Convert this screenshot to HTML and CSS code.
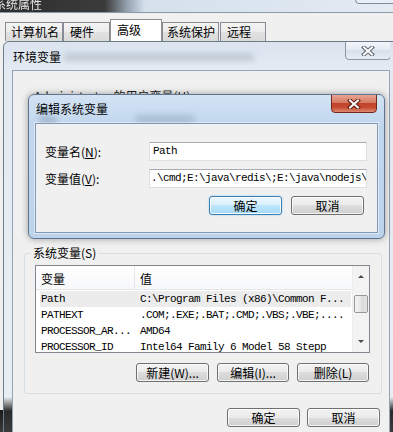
FILE: index.html
```html
<!DOCTYPE html>
<html lang="zh-CN">
<head>
    <meta charset="UTF-8">
    <title>编辑系统变量</title>
    <link rel="stylesheet" href="styles.css">
</head>
<body>
<div class="desk">
    <!-- System properties window behind -->
    <div class="sys-title">
        <span class="sys-title-text">系统属性</span>
        <span class="sys-close"></span>
    </div>
    <div class="sys-body">
        <div class="tabs">
            <span class="tab t1">计算机名</span>
            <span class="tab t2">硬件</span>
            <span class="tab t3 active">高级</span>
            <span class="tab t4">系统保护</span>
            <span class="tab t5">远程</span>
        </div>
    </div>
    <div class="taskbar-edge"></div>

    <!-- Environment variables window -->
    <div class="win env">
        <div class="win-title">
            <span class="title-text">环境变量</span>
            <span class="blur blur-env"></span>
            <span class="close close-gray">
                <svg width="14" height="10" viewBox="0 0 14 10"><path d="M3 1.5L11 8.5M11 1.5L3 8.5" stroke="#5b6470" stroke-width="4" stroke-linecap="square"/><path d="M3 1.5L11 8.5M11 1.5L3 8.5" stroke="#fff" stroke-width="2" stroke-linecap="square"/></svg>
            </span>
        </div>
        <div class="win-client env-client">
            <div class="user-group">
                <span class="user-label">Administrator 的用户变量(U)</span>
            </div>
            <fieldset class="group">
                <legend>系统变量(S)</legend>
                <div class="list">
                    <div class="list-body">
                        <div class="list-head">
                            <span class="head-name">变量</span>
                            <span class="head-val">值</span>
                        </div>
                        <div class="list-row sel"><span>Path</span><span>C:\Program Files (x86)\Common F...</span></div>
                        <div class="list-row"><span>PATHEXT</span><span>.COM;.EXE;.BAT;.CMD;.VBS;.VBE;....</span></div>
                        <div class="list-row"><span>PROCESSOR_AR...</span><span>AMD64</span></div>
                        <div class="list-row"><span>PROCESSOR_ID</span><span>Intel64 Family 6 Model 58 Stepp</span></div>
                    </div>
                    <div class="scrollbar">
                        <span class="arrow-up"></span>
                        <span class="thumb"></span>
                        <span class="arrow-down"></span>
                    </div>
                </div>
                <div class="btn-row">
                    <button class="btn w73">新建(W)...</button>
                    <button class="btn w72">编辑(I)...</button>
                    <button class="btn w72">删除(L)</button>
                </div>
            </fieldset>
            <div class="footer-btns">
                <button class="btn w73">确定</button>
                <button class="btn w73">取消</button>
            </div>
        </div>
    </div>

    <!-- Edit system variable window -->
    <div class="win edit">
        <div class="win-title">
            <span class="title-text">编辑系统变量</span>
            <span class="blur blur-edit-a"></span>
            <span class="blur blur-edit-b"></span>
            <span class="close close-red">
                <svg width="14" height="10" viewBox="0 0 14 10"><path d="M3 1.5L11 8.5M11 1.5L3 8.5" stroke="#5a1a10" stroke-width="4" stroke-linecap="square"/><path d="M3 1.5L11 8.5M11 1.5L3 8.5" stroke="#fff" stroke-width="2" stroke-linecap="square"/></svg>
            </span>
        </div>
        <div class="win-client edit-client">
            <div class="field">
                <label>变量名(<u>N</u>):</label>
                <div class="input">Path</div>
            </div>
            <div class="field">
                <label>变量值(<u>V</u>):</label>
                <div class="input scrolled">.\cmd;E:\java\redis\;E:\java\nodejs\</div>
            </div>
            <div class="edit-btns">
                <button class="btn btn-default w73">确定</button>
                <button class="btn w73">取消</button>
            </div>
        </div>
    </div>
</div>
</body>
</html>
```

FILE: styles.css
```css
* {
    margin: 0;
    padding: 0;
    box-sizing: border-box;
}
body {
    width: 393px;
    height: 432px;
    overflow: hidden;
    background: #f0f0f0;
    font-family: "Noto Sans CJK SC", sans-serif;
    font-size: 12px;
    color: #000;
}
u {
    text-decoration: underline;
}
.desk {
    position: relative;
    height: 432px;
    overflow: hidden;
}

/* system properties window */
.sys-title {
    position: relative;
    height: 13px;
    overflow: hidden;
    background: linear-gradient(90deg, #2e2e2e 0, #3b3b3b 105px, #97a5b3 128px, #d5e0ec 145px, #e3ebf3 100%);
    border-bottom: 1px solid #8c99a7;
}
.sys-title-text {
    display: block;
    margin: -4px 0 0 -6px;
    font-size: 12px;
    line-height: 15px;
    color: #e4e4e4;
    filter: blur(0.6px);
}
.sys-close {
    position: absolute;
    right: -4px;
    top: -4px;
    width: 42px;
    height: 8px;
    border: 1px solid #7f8a97;
    border-radius: 0 0 4px 4px;
    background: #e9eff6;
}
.sys-body {
    padding: 6px 0 0 5px;
}
.tabs {
    display: flex;
    align-items: flex-end;
    height: 22px;
}
.tab {
    height: 19px;
    line-height: 18px;
    padding-left: 6px;
    font-size: 12px;
    border: 1px solid #898c95;
    border-bottom: none;
    background: linear-gradient(#f4f4f4, #ebebeb 50%, #e1e1e1 50%, #dadada);
}
.tab.active {
    height: 22px;
    line-height: 20px;
    background: #fff;
    border-color: #8e8f8f;
}
.t1 { width: 58px; padding-left: 5px; }
.t2 { width: 47px; }
.t3 { width: 52px; }
.t4 { width: 57px; padding-left: 4px; }
.t5 { width: 46px; margin-left: 1px; }
.taskbar-edge {
    position: absolute;
    left: 0;
    top: 410px;
    width: 5px;
    height: 22px;
    background: linear-gradient(#1c1c1c, #3a3a3a);
}

/* windows */
.win {
    position: absolute;
    border: 1px solid #6e7b89;
}
.win-title {
    position: relative;
    height: 28px;
    overflow: hidden;
}
.title-text {
    position: relative;
    z-index: 1;
    display: inline-block;
    font-size: 12px;
    line-height: 14px;
}
.blur {
    position: absolute;
    border-radius: 4px;
    filter: blur(3px);
}
.blur-env {
    left: 52px;
    top: 12px;
    width: 190px;
    height: 6px;
    background: rgba(110, 120, 135, 0.35);
}
.blur-edit-a {
    left: 4px;
    top: 22px;
    width: 18px;
    height: 6px;
    background: rgba(60, 75, 95, 0.3);
}
.blur-edit-b {
    left: 100px;
    top: 20px;
    width: 60px;
    height: 8px;
    background: rgba(60, 75, 95, 0.2);
}
.close {
    position: absolute;
    top: -1px;
    display: flex;
    align-items: center;
    justify-content: center;
    height: 19px;
    border-radius: 0 0 4px 4px;
    z-index: 2;
}
.close-gray {
    right: -1px;
    width: 46px;
    border: 1px solid #8a96a4;
    background: linear-gradient(#f3f6fa, #e3eaf2 50%, #d7e0ea 50%, #e6edf5);
}
.close-red {
    right: 1px;
    width: 46px;
    border: 1px solid #6e2a1d;
    background: linear-gradient(#e9a493, #d57a62 45%, #c2432b 50%, #c54a2f 72%, #e08a70);
}
.win-client {
    background: #f0f0f0;
    border: 1px solid #97a3b2;
}

/* environment variables window */
.env {
    left: 3px;
    top: 41px;
    width: 396px;
    height: 400px;
    padding: 0 8px;
    border-radius: 6px 6px 0 0;
    background: linear-gradient(180deg, #dae4ef 0, #e3eaf2 28px, #e9eef4 355px, #2a2a2a 369px, #3c3c3c 391px);
}
.env .title-text {
    margin: 8px 0 0 1px;
}
.env-client {
    height: 380px;
}
.user-group {
    height: 175px;
    padding: 16px 0 0 21px;
}
.user-label {
    font-size: 12px;
    line-height: 14px;
    color: #222;
}
.group {
    width: 358px;
    margin-left: 11px;
    padding: 5px 11px 11px 10px;
    border: 1px solid #d5dfe5;
    border-radius: 3px;
}
.group legend {
    margin-left: -4px;
    padding: 0 2px;
    font-size: 12px;
    line-height: 14px;
}
.list {
    display: flex;
    height: 88px;
    background: #fff;
    border: 1px solid #828790;
    overflow: hidden;
}
.list-body {
    flex: 1;
}
.list-head {
    display: flex;
    height: 24px;
    border-bottom: 1px solid #e5e5e5;
    background: linear-gradient(#fff, #f7f8fa);
}
.list-head span {
    padding: 6px 0 0 5px;
    font-size: 12px;
    line-height: 14px;
}
.head-name {
    width: 99px;
    border-right: 1px solid #e5e5e5;
}
.list-row {
    display: grid;
    grid-template-columns: 99px 1fr;
    height: 16px;
    padding-left: 5px;
    font-family: "Liberation Mono", monospace;
    font-size: 11px;
    letter-spacing: -0.6px;
    line-height: 16px;
    white-space: nowrap;
}
.list-row.sel {
    margin: 1px 1px 0 4px;
    padding-left: 1px;
    background: #ececec;
}
.scrollbar {
    position: relative;
    width: 17px;
    background: #f3f3f3;
    border-left: 1px solid #ececec;
}
.arrow-up,
.arrow-down {
    position: absolute;
    left: 5px;
    width: 0;
    height: 0;
    border-left: 3px solid transparent;
    border-right: 3px solid transparent;
}
.arrow-up {
    top: 9px;
    border-bottom: 3px solid #4d4d4d;
}
.arrow-down {
    top: 74px;
    border-top: 3px solid #4d4d4d;
}
.thumb {
    position: absolute;
    left: 1px;
    top: 29px;
    width: 14px;
    height: 18px;
    border: 1px solid #979797;
    border-radius: 2px;
    background: linear-gradient(90deg, #f3f3f3, #e6e6e6 50%, #dadada 50%, #e2e2e2);
}
.btn {
    height: 19px;
    border: 1px solid #707070;
    border-radius: 3px;
    background: linear-gradient(#f2f2f2, #ebebeb 50%, #dddddd 50%, #cfcfcf);
    box-shadow: inset 0 0 0 1px rgba(255, 255, 255, 0.75);
    font-family: "Noto Sans CJK SC", sans-serif;
    font-size: 12px;
    line-height: 15px;
    color: #000;
}
.w72 { width: 72px; }
.w73 { width: 73px; }
.btn-default {
    border-color: #3c7fb1;
    background: linear-gradient(#eaf6fd, #d9f0fc 50%, #bee6fd 50%, #a7d9f5);
    box-shadow: inset 0 0 0 1px rgba(255, 255, 255, 0.8), 0 0 2px #8ecbf0;
}
.btn-row {
    display: flex;
    justify-content: flex-end;
    gap: 8px;
    margin: 10px 1px 0 0;
}
.footer-btns {
    display: flex;
    justify-content: flex-end;
    gap: 7px;
    margin: 14px 9px 0 0;
}

/* edit system variable window */
.edit {
    left: 28px;
    top: 94px;
    width: 357px;
    height: 145px;
    padding: 0 6px 6px;
    border-color: #5f7590;
    border-radius: 6px;
    background: linear-gradient(180deg, #d3e3f4 0, #c2d7ee 28px, #bcd3ec 100%);
    box-shadow: 0 0 7px rgba(0, 0, 0, 0.35);
}
.edit .title-text {
    margin: 7px 0 0 1px;
}
.edit-client {
    height: 110px;
    padding: 18px 11px 0 9px;
    border-color: #8197b3;
    box-shadow: 0 0 0 1px rgba(255, 255, 255, 0.5);
}
.field {
    display: grid;
    grid-template-columns: 104px 218px;
    align-items: center;
    height: 19px;
    margin-bottom: 8px;
}
.field label {
    font-size: 12px;
    line-height: 14px;
}
.input {
    height: 19px;
    padding-left: 3px;
    background: #fff;
    border: 1px solid #dbdfe6;
    border-top-color: #abadb3;
    font-family: "Liberation Mono", monospace;
    font-size: 11px;
    letter-spacing: -0.6px;
    line-height: 17px;
    white-space: nowrap;
    overflow: hidden;
}
.input.scrolled {
    padding-left: 1px;
}
.edit-btns {
    display: flex;
    justify-content: flex-end;
    gap: 9px;
    margin: 4px 2px 0 0;
}
```
